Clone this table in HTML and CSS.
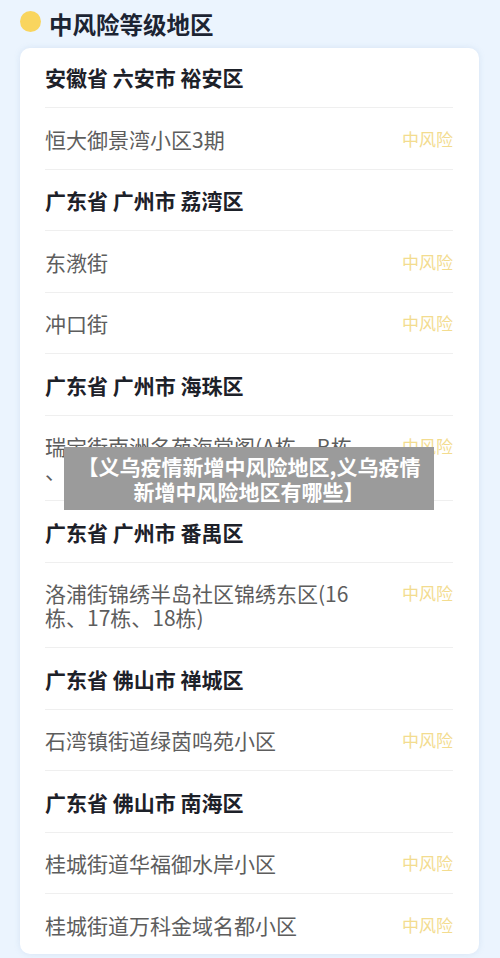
FILE: index.html
```html
<!DOCTYPE html>
<html lang="zh-CN">
<head>
<meta charset="utf-8">
<title>中风险等级地区</title>
<link rel="stylesheet" href="styles.css">
</head>
<body>
<div class="page">
  <header class="title">
    <span class="dot"></span>
    <h1>中风险等级地区</h1>
  </header>
  <section class="card">
    <div class="row head">安徽省 六安市 裕安区</div>
    <div class="row item"><span class="name">恒大御景湾小区3期</span><span class="risk">中风险</span></div>
    <div class="row head">广东省 广州市 荔湾区</div>
    <div class="row item"><span class="name">东漖街</span><span class="risk">中风险</span></div>
    <div class="row item"><span class="name">冲口街</span><span class="risk">中风险</span></div>
    <div class="row head">广东省 广州市 海珠区</div>
    <div class="row item"><span class="name">瑞宝街南洲名苑海棠阁(A栋、B栋<br>、C栋)</span><span class="risk">中风险</span></div>
    <div class="row head">广东省 广州市 番禺区</div>
    <div class="row item"><span class="name">洛浦街锦绣半岛社区锦绣东区(16<br>栋、17栋、18栋)</span><span class="risk">中风险</span></div>
    <div class="row head">广东省 佛山市 禅城区</div>
    <div class="row item"><span class="name">石湾镇街道绿茵鸣苑小区</span><span class="risk">中风险</span></div>
    <div class="row head">广东省 佛山市 南海区</div>
    <div class="row item"><span class="name">桂城街道华福御水岸小区</span><span class="risk">中风险</span></div>
    <div class="row item"><span class="name">桂城街道万科金域名都小区</span><span class="risk">中风险</span></div>
  </section>
  <div class="overlay">【义乌疫情新增中风险地区,义乌疫情<br>新增中风险地区有哪些】</div>
</div>
</body>
</html>
```
FILE: styles.css
```css
html, body {
  margin: 0;
  padding: 0;
}
body {
  background: #ebf4fe;
  font-family: "Noto Sans CJK SC", "Noto Sans", sans-serif;
}
.page {
  position: relative;
  width: 500px;
  height: 958px;
  overflow: hidden;
}
.title {
  display: flex;
  align-items: center;
  height: 48px;
  padding-left: 20px;
  box-sizing: border-box;
}
.dot {
  width: 21px;
  height: 21px;
  border-radius: 50%;
  background: #f9d55e;
  margin-bottom: 5px;
  margin-right: 8px;
  flex: none;
}
.title h1 {
  margin: 0;
  font-size: 23.5px;
  font-weight: 700;
  color: #1c2433;
  line-height: 30px;
}
.card {
  margin: 0 21px 0 20px;
  padding: 0 26px 0 25px;
  background: #ffffff;
  border-radius: 10px;
  box-shadow: 0 0 6px rgba(120, 160, 200, 0.18);
}
.row {
  padding: 18.25px 0;
  line-height: 24px;
  border-bottom: 1px solid #efefef;
}
.row:first-child {
  padding-top: 17px;
}
.row:last-child {
  border-bottom: none;
  padding-bottom: 17px;
}
.head {
  font-size: 21px;
  font-weight: 700;
  color: #1d2129;
}
.item {
  display: flex;
  align-items: flex-start;
  justify-content: space-between;
}
.name {
  font-size: 21px;
  color: #5d5d5d;
}
.risk {
  flex: none;
  font-size: 17px;
  color: #f3dc8f;
  margin-left: 12px;
}
.overlay {
  position: absolute;
  left: 64px;
  top: 447px;
  width: 370px;
  padding: 6.5px 0;
  background: #9b9b9b;
  color: #ffffff;
  font-size: 21px;
  font-weight: 700;
  line-height: 25px;
  text-align: center;
}
```
